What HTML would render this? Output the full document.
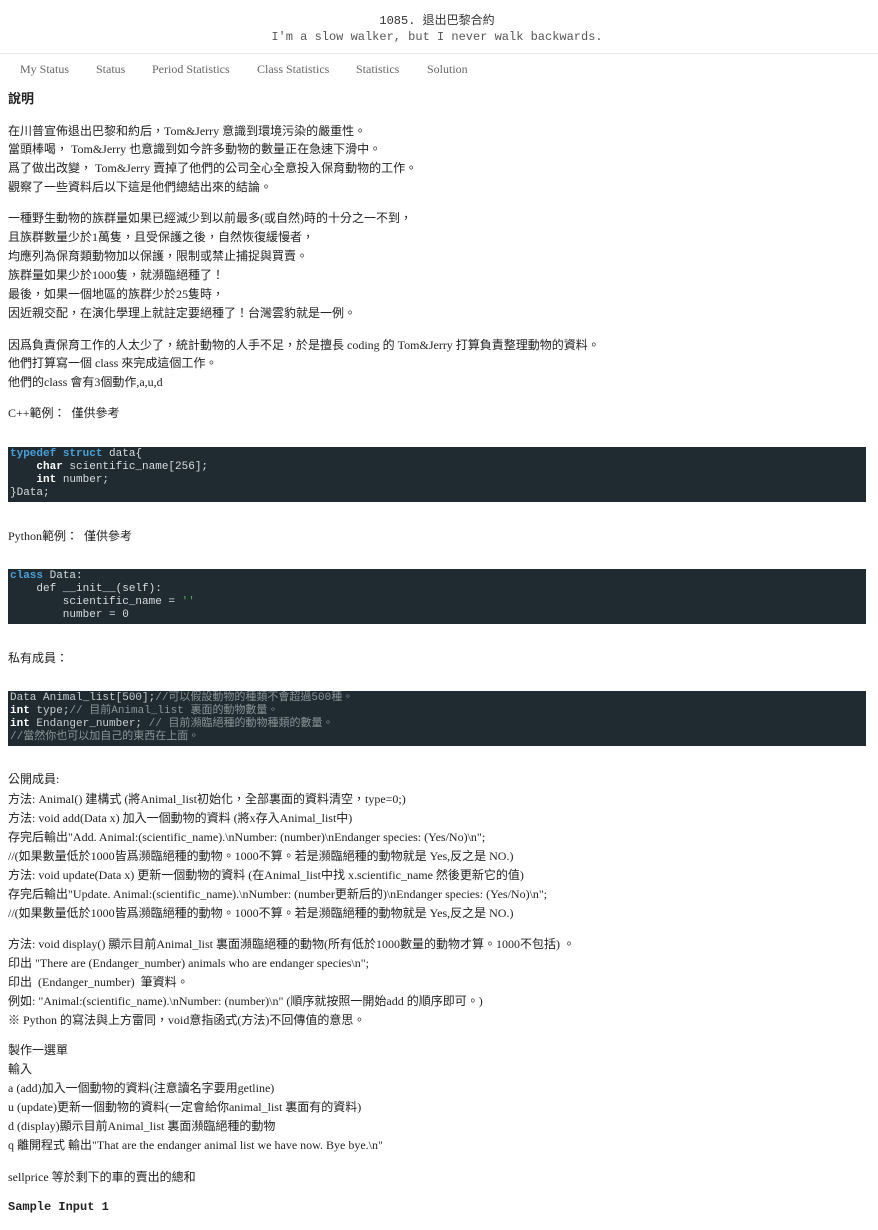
<!DOCTYPE html>
<html><head><meta charset="utf-8"><style>
body{margin:0;width:878px;height:1230px;background:#fff;position:relative;overflow:hidden;font-family:"Liberation Serif","Noto Sans CJK TC",serif;font-size:12px;color:#222}
.l{position:absolute;left:8px;white-space:pre;line-height:18px;margin-top:1px}
.c{position:absolute;left:8px;width:858px;background:#1f2b31;font-family:"Liberation Mono","Noto Sans CJK TC",monospace;font-size:11px;line-height:13px;color:#d8dde0;white-space:pre;padding:1px 0 0 2px;box-sizing:border-box}
.k{color:#4a9fd8;font-weight:bold}.b{color:#fff;font-weight:bold}.g{color:#8a9499}.s{color:#4caf50}
.nav{position:absolute;top:62px;font-size:12px;color:#666}
</style></head><body>
<div style="position:absolute;top:13px;left:0;width:874px;text-align:center;font-family:'Liberation Mono','Noto Sans CJK TC',monospace;font-size:12px;color:#333;line-height:16px">1085. 退出巴黎合約<br><span style="color:#555">I'm a slow walker, but I never walk backwards.</span></div>
<div style="position:absolute;top:53px;left:0;width:878px;border-top:1px solid #e6e6e6"></div>
<div class="nav" style="left:20px">My Status</div>
<div class="nav" style="left:96px">Status</div>
<div class="nav" style="left:152px">Period Statistics</div>
<div class="nav" style="left:257px">Class Statistics</div>
<div class="nav" style="left:356px">Statistics</div>
<div class="nav" style="left:427px">Solution</div>
<div class="l" style="top:89px;font-weight:bold;font-size:13px">說明</div>
<div class="l" style="top:121px">在川普宣佈退出巴黎和約后，Tom&amp;Jerry 意識到環境污染的嚴重性。</div>
<div class="l" style="top:139px">當頭棒喝， Tom&amp;Jerry 也意識到如今許多動物的數量正在急速下滑中。</div>
<div class="l" style="top:158px">爲了做出改變， Tom&amp;Jerry 賣掉了他們的公司全心全意投入保育動物的工作。</div>
<div class="l" style="top:177px">觀察了一些資料后以下這是他們總結出來的結論。</div>
<div class="l" style="top:208px">一種野生動物的族群量如果已經減少到以前最多(或自然)時的十分之一不到，</div>
<div class="l" style="top:227px">且族群數量少於1萬隻，且受保護之後，自然恢復緩慢者，</div>
<div class="l" style="top:246px">均應列為保育類動物加以保護，限制或禁止捕捉與買賣。</div>
<div class="l" style="top:265px">族群量如果少於1000隻，就瀕臨絕種了！</div>
<div class="l" style="top:284px">最後，如果一個地區的族群少於25隻時，</div>
<div class="l" style="top:303px">因近親交配，在演化學理上就註定要絕種了！台灣雲豹就是一例。</div>
<div class="l" style="top:335px">因爲負責保育工作的人太少了，統計動物的人手不足，於是擅長 coding 的 Tom&amp;Jerry 打算負責整理動物的資料。</div>
<div class="l" style="top:353px">他們打算寫一個 class 來完成這個工作。</div>
<div class="l" style="top:372px">他們的class 會有3個動作,a,u,d</div>
<div class="l" style="top:403px">C++範例：  僅供參考</div>
<div class="c" style="top:447px;height:55px"><span class="k">typedef</span> <span class="k">struct</span> data{
    <span class="b">char</span> scientific_name[256];
    <span class="b">int</span> number;
}Data;</div>
<div class="l" style="top:526px">Python範例：  僅供參考</div>
<div class="c" style="top:569px;height:55px"><span class="k">class</span> Data:
    def __init__(self):
        scientific_name = <span class="s">''</span>
        number = 0</div>
<div class="l" style="top:648px">私有成員：</div>
<div class="c" style="top:691px;height:55px;color:#c8cdd0">Data Animal_list[500];<span class="g">//可以假設動物的種類不會超過500種。</span>
<span class="b">int</span> type;<span class="g">// 目前Animal_list 裏面的動物數量。</span>
<span class="b">int</span> Endanger_number; <span class="g">// 目前瀕臨絕種的動物種類的數量。</span>
<span class="g">//當然你也可以加自己的東西在上面。</span></div>
<div class="l" style="top:769px">公開成員:</div>
<div class="l" style="top:789px">方法: Animal() 建構式 (將Animal_list初始化，全部裏面的資料清空，type=0;)</div>
<div class="l" style="top:808px">方法: void add(Data x) 加入一個動物的資料 (將x存入Animal_list中)</div>
<div class="l" style="top:827px">存完后輸出"Add. Animal:(scientific_name).\nNumber: (number)\nEndanger species: (Yes/No)\n";</div>
<div class="l" style="top:846px">//(如果數量低於1000皆爲瀕臨絕種的動物。1000不算。若是瀕臨絕種的動物就是 Yes,反之是 NO.)</div>
<div class="l" style="top:865px">方法: void update(Data x) 更新一個動物的資料 (在Animal_list中找 x.scientific_name 然後更新它的值)</div>
<div class="l" style="top:884px">存完后輸出"Update. Animal:(scientific_name).\nNumber: (number更新后的)\nEndanger species: (Yes/No)\n";</div>
<div class="l" style="top:903px">//(如果數量低於1000皆爲瀕臨絕種的動物。1000不算。若是瀕臨絕種的動物就是 Yes,反之是 NO.)</div>
<div class="l" style="top:934px">方法: void display() 顯示目前Animal_list 裏面瀕臨絕種的動物(所有低於1000數量的動物才算。1000不包括) 。</div>
<div class="l" style="top:953px">印出 "There are (Endanger_number) animals who are endanger species\n";</div>
<div class="l" style="top:972px">印出  (Endanger_number)  筆資料。</div>
<div class="l" style="top:991px">例如: "Animal:(scientific_name).\nNumber: (number)\n" (順序就按照一開始add 的順序即可。)</div>
<div class="l" style="top:1010px">※ Python 的寫法與上方雷同，void意指函式(方法)不回傳值的意思。</div>
<div class="l" style="top:1040px">製作一選單</div>
<div class="l" style="top:1059px">輸入</div>
<div class="l" style="top:1078px">a (add)加入一個動物的資料(注意讀名字要用getline)</div>
<div class="l" style="top:1097px">u (update)更新一個動物的資料(一定會給你animal_list 裏面有的資料)</div>
<div class="l" style="top:1116px">d (display)顯示目前Animal_list 裏面瀕臨絕種的動物</div>
<div class="l" style="top:1135px">q 離開程式 輸出"That are the endanger animal list we have now. Bye bye.\n"</div>
<div class="l" style="top:1167px">sellprice 等於剩下的車的賣出的總和</div>
<div class="l" style="top:1197px;font-family:'Liberation Mono',monospace;font-weight:bold;font-size:12px">Sample Input 1</div>
</body></html>
